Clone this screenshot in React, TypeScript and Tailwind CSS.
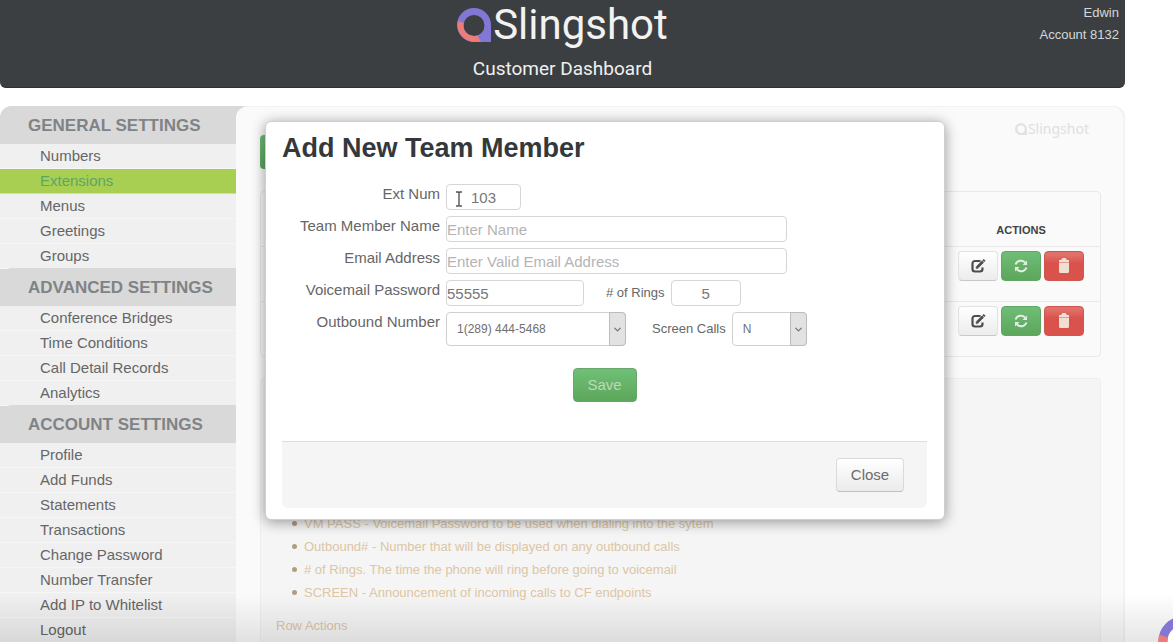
import { useState } from "react";
import { ChevronDown } from "lucide-react";

interface MenuSection {
  title: string;
  items: string[];
}

const sections: MenuSection[] = [
  {
    title: "GENERAL SETTINGS",
    items: ["Numbers", "Extensions", "Menus", "Greetings", "Groups"],
  },
  {
    title: "ADVANCED SETTINGS",
    items: [
      "Conference Bridges",
      "Time Conditions",
      "Call Detail Records",
      "Analytics",
    ],
  },
  {
    title: "ACCOUNT SETTINGS",
    items: [
      "Profile",
      "Add Funds",
      "Statements",
      "Transactions",
      "Change Password",
      "Number Transfer",
      "Add IP to Whitelist",
      "Logout",
    ],
  },
];

const notes = [
  "VM PASS - Voicemail Password to be used when dialing into the sytem",
  "Outbound# - Number that will be displayed on any outbound calls",
  "# of Rings. The time the phone will ring before going to voicemail",
  "SCREEN - Announcement of incoming calls to CF endpoints",
];

const inputClass =
  "h-[26px] rounded border border-[#d6d6d6] bg-white text-[15px] text-[#777] placeholder:text-[#b4b4b4] outline-none";

function LogoMark({ className, muted }: { className?: string; muted?: boolean }) {
  const top = muted ? "#e3e3e3" : "#8377d6";
  const bottom = muted ? "#e6e2e0" : "#ea7d76";
  return (
    <svg viewBox="0 0 34 34" className={className} aria-hidden="true">
      <path
        fillRule="evenodd"
        fill={top}
        d="M17 0a17 17 0 0 1 17 17v17H17A17 17 0 0 1 17 0Zm0 7a10.5 10.5 0 1 0 0 21a10.5 10.5 0 0 0 0-21Z"
      />
      <path
        fill={bottom}
        d="M1 13A17 17 0 0 0 17 34h7l-3.600-6.600A10.500 10.500 0 0 1 6.800 15Z"
      />
    </svg>
  );
}

function EditIcon() {
  return (
    <svg viewBox="0 0 16 16" className="size-4" fill="none" aria-hidden="true">
      <path
        d="M10.500 3H5a2.500 2.500 0 0 0-2.500 2.500v5.500A2.500 2.500 0 0 0 5 13.500h5A2.500 2.500 0 0 0 12.500 11V9.500"
        stroke="#4a4d50"
        strokeWidth="2.200"
      />
      <path d="M7 9.500 13 3.500" stroke="#4a4d50" strokeWidth="2.600" />
      <path d="M13.300 3.200 14.600 1.900" stroke="#4a4d50" strokeWidth="2.600" />
      <path d="M5.800 10.700V8.200l2.500 2.500Z" fill="#4a4d50" />
    </svg>
  );
}

function RefreshIcon() {
  return (
    <svg viewBox="0 0 16 16" className="size-4" aria-hidden="true">
      <g fill="none" stroke="#e3efe3" strokeWidth="2">
        <path d="M2.500 6.500A5.700 5.700 0 0 1 12 4.500" />
        <path d="M13.500 9.500A5.700 5.700 0 0 1 4 11.500" />
      </g>
      <path fill="#e3efe3" d="M14 2.500v4.500H9.500ZM2 13.500V9h4.500Z" />
    </svg>
  );
}

function TrashIcon() {
  return (
    <svg viewBox="0 0 16 18" className="h-[18px] w-4" aria-hidden="true">
      <path
        fill="#f0dfd2"
        d="M6.500 1h3L11 3h2v2.500H3V3h2ZM3 6h10v8.500a1.500 1.500 0 0 1-1.500 1.500h-7A1.500 1.500 0 0 1 3 14.500Z"
      />
    </svg>
  );
}

function RowButtons() {
  return (
    <div className="flex justify-center gap-[3px]">
      <button
        aria-label="Edit"
        className="flex h-[30px] w-10 items-center justify-center rounded border border-[#e2e2e2] border-b-[#c8c8c8] bg-linear-to-b from-white to-[#ececec]"
      >
        <EditIcon />
      </button>
      <button
        aria-label="Refresh"
        className="flex h-[30px] w-10 items-center justify-center rounded border border-[#5fa765] bg-linear-to-b from-[#6fbd76] to-[#5da65c]"
      >
        <RefreshIcon />
      </button>
      <button
        aria-label="Delete"
        className="flex h-[30px] w-10 items-center justify-center rounded border border-[#cf5650] bg-linear-to-b from-[#e0706a] from-10% to-[#d9524c] to-40%"
      >
        <TrashIcon />
      </button>
    </div>
  );
}

function Select({
  id,
  options,
  className,
}: {
  id: string;
  options: string[];
  className: string;
}) {
  return (
    <div className={`relative ${className}`}>
      <select
        id={id}
        className="h-[34px] w-full appearance-none rounded border border-[#d0d0d0] bg-white pl-[10px] text-xs text-[#707070] outline-none"
      >
        {options.map((option) => (
          <option key={option}>{option}</option>
        ))}
      </select>
      <span className="pointer-events-none absolute inset-y-0 right-0 flex w-[17px] items-center justify-center rounded-r border border-[#bcbcbc] bg-[#e2e2e2] text-[#777]">
        <ChevronDown size={11} strokeWidth={3} />
      </span>
    </div>
  );
}

function Label({ htmlFor, children }: { htmlFor: string; children: string }) {
  return (
    <label
      htmlFor={htmlFor}
      className="w-[158px] shrink-0 text-right text-[15px] leading-5 text-[#666]"
    >
      {children}
    </label>
  );
}

function TeamMemberDialog() {
  const [extNum, setExtNum] = useState("103");
  const [password, setPassword] = useState("55555");
  const [rings, setRings] = useState("5");

  return (
    <div
      role="dialog"
      aria-labelledby="dialog-title"
      className="w-full max-w-[680px] rounded-md border border-[#cfcfcf] bg-white pt-[10px] pr-[17px] pb-[11px] pl-4 shadow-[0_2px_14px_rgba(0,0,0,0.4)]"
    >
      <h2
        id="dialog-title"
        className="text-[27px] leading-8 font-bold text-[#34383b]"
      >
        Add New Team Member
      </h2>

      <form
        className="mt-5 flex flex-col gap-[6px]"
        onSubmit={(e) => e.preventDefault()}
      >
        <div className="flex gap-[6px]">
          <Label htmlFor="ext">Ext Num</Label>
          <div className="relative">
            <input
              id="ext"
              value={extNum}
              onChange={(e) => setExtNum(e.target.value)}
              className={`${inputClass} w-[75px] text-center`}
            />
            {/* text cursor */}
            <svg
              viewBox="0 0 8 16"
              className="absolute top-[7px] left-[9px] h-4 w-2"
              fill="none"
              stroke="#555"
              strokeWidth="1.400"
              aria-hidden="true"
            >
              <path d="M1 1h2l1 .5L5 1h2M4 1.500v13M1 15h2l1-.5 1 .5h2" />
            </svg>
          </div>
        </div>
        <div className="flex gap-[6px]">
          <Label htmlFor="name">Team Member Name</Label>
          <input
            id="name"
            placeholder="Enter Name"
            className={`${inputClass} w-full max-w-[341px]`}
          />
        </div>
        <div className="flex gap-[6px]">
          <Label htmlFor="email">Email Address</Label>
          <input
            id="email"
            type="email"
            placeholder="Enter Valid Email Address"
            className={`${inputClass} w-full max-w-[341px]`}
          />
        </div>
        <div className="flex gap-[6px]">
          <Label htmlFor="vm">Voicemail Password</Label>
          <input
            id="vm"
            value={password}
            onChange={(e) => setPassword(e.target.value)}
            className={`${inputClass} w-[138px]`}
          />
          <div className="flex items-center gap-[6px] pl-4">
            <label htmlFor="rings" className="text-[13px] text-[#666]">
              # of Rings
            </label>
            <input
              id="rings"
              value={rings}
              onChange={(e) => setRings(e.target.value)}
              className={`${inputClass} w-[70px] text-center`}
            />
          </div>
        </div>
        <div className="flex gap-[6px]">
          <Label htmlFor="outbound">Outbound Number</Label>
          <Select
            id="outbound"
            options={["1(289) 444-5468"]}
            className="w-[180px]"
          />
          <div className="flex items-center gap-[6px] pl-5">
            <label htmlFor="screen" className="text-[13px] text-[#666]">
              Screen Calls
            </label>
            <Select id="screen" options={["N", "Y"]} className="w-[75px]" />
          </div>
        </div>
        <button
          type="submit"
          className="mt-4 h-[34px] w-16 self-center rounded border border-[#6aa56c] bg-linear-to-b from-[#6fc077] to-[#5da65a] text-[15px] text-[#bcd9bb]"
        >
          Save
        </button>
      </form>

      <div className="mt-[39px] flex justify-end rounded-b-md border-t border-[#dedede] bg-[#f5f5f5] px-[23px] py-4">
        <button className="h-[34px] w-[68px] rounded border border-[#dadada] border-b-[#c0c0c0] bg-linear-to-b from-white to-[#ebebeb] text-[15px] text-[#6b6b6b]">
          Close
        </button>
      </div>
    </div>
  );
}

export default function App() {
  const [active, setActive] = useState("Extensions");

  return (
    <div className="relative h-screen overflow-hidden bg-white font-['Liberation_Sans',Arial,sans-serif]">
      <div className="mr-12">
        <header className="grid h-[88px] grid-cols-[1fr_auto_1fr] rounded-b-md border-b border-[#2d3133] bg-[#3b3f42]">
          <div className="col-start-2 flex flex-col items-center">
            <div className="flex h-[49px] items-center gap-[2px]">
              <LogoMark className="size-[34px]" />
              <span className="font-['Roboto',sans-serif] text-[42px] leading-[50px] text-[#f2f2f2]">
                Slingshot
              </span>
            </div>
            <div className="pt-2 font-['Roboto',sans-serif] text-[19px] leading-6 text-[#f0f0f0]">
              Customer Dashboard
            </div>
          </div>
          <div className="pt-[2px] pr-[6px] text-right text-[13px] leading-[22px] text-[#d5d7d8]">
            <div>Edwin</div>
            <div>Account 8132</div>
          </div>
        </header>

        <div className="mt-[18px] flex rounded-t-xl bg-[#d9d9d9]">
          <nav className="w-[236px] shrink-0">
            {sections.map((section) => (
              <div key={section.title}>
                <h3 className="relative flex h-[38px] items-center rounded-tl-xl bg-[#d9d9d9] pt-[2px] pl-7 text-[17px] font-bold text-[#808386]">
                  {section.title}
                </h3>
                <ul className="-mb-px bg-[#f0f0f1]">
                  {section.items.map((item) => (
                    <li key={item}>
                      <a
                        href="#"
                        onClick={() => setActive(item)}
                        className={`block h-[25px] border-b pl-10 text-[15px] leading-6 ${
                          active === item
                            ? "border-[#d5d6bb] bg-[#a8cf52] text-[#5fa562]"
                            : "border-[#f6f6f6] text-[#666]"
                        }`}
                      >
                        {item}
                      </a>
                    </li>
                  ))}
                </ul>
              </div>
            ))}
          </nav>

          <main className="min-w-0 flex-1 rounded-t-xl border-t border-r-2 border-[#f3f3f3] bg-[#fafafa] pr-[22px] pl-6">
            <div className="flex justify-end pt-3 pr-3">
              <div className="flex items-center gap-px">
                <LogoMark muted className="size-3" />
                <span className="font-['Noto_Sans',sans-serif] text-sm leading-5 text-[#e0e0e0]">
                  Slingshot
                </span>
              </div>
            </div>
            <button
              aria-label="Add"
              className="-mt-1 block h-[34px] w-24 rounded bg-linear-to-b from-[#6fbd76] to-[#5da65c]"
            />

            <table className="mt-[22px] w-full border-separate border-spacing-0 rounded border border-[#e9e9e9]">
              <thead>
                <tr className="h-[54px]">
                  <th />
                  <th className="w-[158px] pb-2 align-bottom text-[11px] leading-4 font-bold text-[#3f4347]">
                    ACTIONS
                  </th>
                </tr>
              </thead>
              <tbody>
                {[1, 2].map((row) => (
                  <tr key={row} className="h-[55px]">
                    <td className="border-t border-[#e9e9e9]" />
                    <td className="border-t border-[#e9e9e9] pt-1 align-top">
                      <RowButtons />
                    </td>
                  </tr>
                ))}
              </tbody>
            </table>

            <section className="mt-[21px] rounded border border-[#eeeeee] bg-[#f5f5f5] px-[15px] pt-[133px] pb-10 text-[13px] leading-[23px] text-[#dcc6a4]">
              <ul className="pl-7">
                {notes.map((note) => (
                  <li
                    key={note}
                    className="relative before:absolute before:top-[9px] before:-left-3 before:size-[5px] before:rounded-full before:bg-[#b59c7c]"
                  >
                    {note}
                  </li>
                ))}
              </ul>
              <p className="mt-[10px]">Row Actions</p>
            </section>
          </main>
        </div>
      </div>

      <div className="pointer-events-none absolute inset-x-0 bottom-0 h-12 bg-linear-to-b from-transparent to-black/10" />

      {/* chat widget, partly off the right edge */}
      <svg
        viewBox="0 0 50 50"
        className="absolute -right-[35px] -bottom-6 size-[50px]"
        fill="none"
        strokeWidth="9"
        aria-hidden="true"
      >
        <circle cx="25" cy="25" r="20" fill="#fff" stroke="#8377d6" />
        <path d="M5.500 20A20 20 0 0 0 25 45" stroke="#ea7d76" />
      </svg>

      <div className="absolute inset-0 flex items-start justify-center pt-[121px] pl-[37px]">
        <TeamMemberDialog />
      </div>
    </div>
  );
}
